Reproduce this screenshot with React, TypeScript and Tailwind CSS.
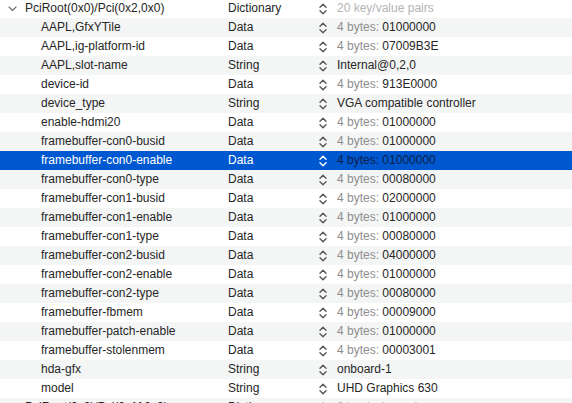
import React from "react";

type Row = { key: string; type: string; value: string; prefix?: string; level: number; dim?: boolean; open?: boolean };

const rows: Row[] = [
  { key: "PciRoot(0x0)/Pci(0x2,0x0)", type: "Dictionary", value: "20 key/value pairs", level: 0, dim: true, open: true },
  { key: "AAPL,GfxYTile", type: "Data", prefix: "4 bytes: ", value: "01000000", level: 1 },
  { key: "AAPL,ig-platform-id", type: "Data", prefix: "4 bytes: ", value: "07009B3E", level: 1 },
  { key: "AAPL,slot-name", type: "String", value: "Internal@0,2,0", level: 1 },
  { key: "device-id", type: "Data", prefix: "4 bytes: ", value: "913E0000", level: 1 },
  { key: "device_type", type: "String", value: "VGA compatible controller", level: 1 },
  { key: "enable-hdmi20", type: "Data", prefix: "4 bytes: ", value: "01000000", level: 1 },
  { key: "framebuffer-con0-busid", type: "Data", prefix: "4 bytes: ", value: "01000000", level: 1 },
  { key: "framebuffer-con0-enable", type: "Data", prefix: "4 bytes: ", value: "01000000", level: 1 },
  { key: "framebuffer-con0-type", type: "Data", prefix: "4 bytes: ", value: "00080000", level: 1 },
  { key: "framebuffer-con1-busid", type: "Data", prefix: "4 bytes: ", value: "02000000", level: 1 },
  { key: "framebuffer-con1-enable", type: "Data", prefix: "4 bytes: ", value: "01000000", level: 1 },
  { key: "framebuffer-con1-type", type: "Data", prefix: "4 bytes: ", value: "00080000", level: 1 },
  { key: "framebuffer-con2-busid", type: "Data", prefix: "4 bytes: ", value: "04000000", level: 1 },
  { key: "framebuffer-con2-enable", type: "Data", prefix: "4 bytes: ", value: "01000000", level: 1 },
  { key: "framebuffer-con2-type", type: "Data", prefix: "4 bytes: ", value: "00080000", level: 1 },
  { key: "framebuffer-fbmem", type: "Data", prefix: "4 bytes: ", value: "00009000", level: 1 },
  { key: "framebuffer-patch-enable", type: "Data", prefix: "4 bytes: ", value: "01000000", level: 1 },
  { key: "framebuffer-stolenmem", type: "Data", prefix: "4 bytes: ", value: "00003001", level: 1 },
  { key: "hda-gfx", type: "String", value: "onboard-1", level: 1 },
  { key: "model", type: "String", value: "UHD Graphics 630", level: 1 },
  { key: "PciRoot(0x0)/Pci(0x1f,0x3)", type: "Dictionary", value: "2 key/value pairs", level: 0, dim: true, open: false },
];

const SELECTED = 8;

function UpDown({ sel }: { sel: boolean }) {
  return (
    <svg width="8" height="12" viewBox="0 0 8 12" fill="none" stroke={sel ? "#ffffff" : "#555555"} strokeWidth="1.4" strokeLinecap="round" strokeLinejoin="round">
      <path d="M1 4.2 L4 1.3 L7 4.2" />
      <path d="M1 7.8 L4 10.7 L7 7.8" />
    </svg>
  );
}

function Disclosure({ open }: { open?: boolean }) {
  return (
    <svg width="9" height="9" viewBox="0 0 9 9" fill="none" stroke="#6e6e6e" strokeWidth="1.1" strokeLinecap="round" strokeLinejoin="round">
      {open ? <path d="M1 3 L4.5 6.5 L8 3" /> : <path d="M3 1 L6.5 4.5 L3 8" />}
    </svg>
  );
}

export default function App() {
  return (
    <div className="w-[572px] h-[403px] overflow-hidden bg-white" style={{ fontFamily: "'Liberation Sans', Arial, sans-serif" }}>
      <div className="mt-[-1px] flex flex-col text-[12px] leading-[19px] text-[#262626]">
        {rows.map((r, i) => {
          const sel = i === SELECTED;
          const bg = sel ? "bg-[#0058d0]" : i % 2 === 1 ? "bg-[#f4f5f5]" : "bg-white";
          return (
            <div key={i} className={`flex h-[19px] shrink-0 items-center ${bg}`}>
              <div className={`flex w-[228px] shrink-0 items-center ${r.level === 0 ? "pl-[8px]" : "pl-[41px]"}`}>
                {r.level === 0 && (
                  <span className="mr-[8px] flex w-[9px] items-center">
                    <Disclosure open={r.open} />
                  </span>
                )}
                <span className={sel ? "text-white" : "text-[#262626]"}>{r.key}</span>
              </div>
              <div className={`w-[91px] shrink-0 ${sel ? "text-white" : "text-[#262626]"}`}>{r.type}</div>
              <div className="flex w-[18px] shrink-0 items-center">
                <UpDown sel={sel} />
              </div>
              <div className="flex-1 whitespace-nowrap">
                {r.dim ? (
                  <span className="text-[#b4b4b4]">{r.value}</span>
                ) : (
                  <>
                    {r.prefix && <span className={sel ? "text-[#0a1f44]" : "text-[#8e8e8e]"}>{r.prefix}</span>}
                    <span className={sel ? "text-[#0a1f44]" : "text-[#262626]"}>{r.value}</span>
                  </>
                )}
              </div>
            </div>
          );
        })}
      </div>
    </div>
  );
}
